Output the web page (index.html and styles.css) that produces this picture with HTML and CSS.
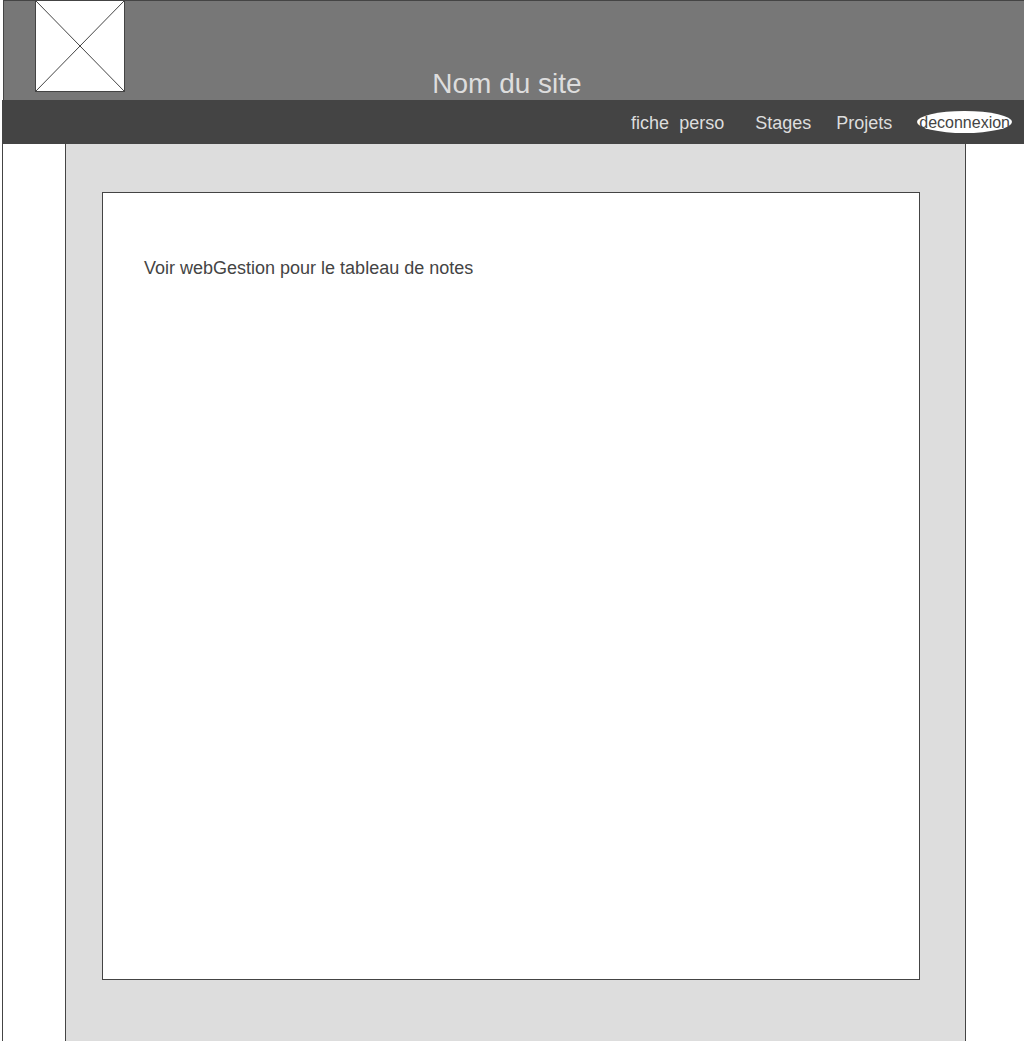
FILE: index.html
```html
<!DOCTYPE html>
<html lang="fr">
<head>
  <meta charset="utf-8">
  <meta name="viewport" content="width=device-width, initial-scale=1">
  <title>Nom du site</title>
  <link rel="stylesheet" href="styles.css">
</head>
<body>
  <div class="page">
    <header class="header">
      <svg class="logo" viewBox="0 0 90 92" role="img" aria-label="Logo">
        <rect x="0.5" y="0.5" width="89" height="91" fill="#fff" stroke="#444"/>
        <path d="M0.5 0.5L89.5 91.5M89.5 0.5L0.5 91.5" fill="none" stroke="#444"/>
      </svg>
      <h1 class="title">Nom du site</h1>
    </header>
    <nav class="nav">
      <a class="nav-link nav-link-wide" href="#fiche">fiche  perso</a>
      <a class="nav-link" href="#stages">Stages</a>
      <a class="nav-link" href="#projets">Projets</a>
      <button class="logout" type="button">deconnexion</button>
    </nav>
    <div class="content">
      <main class="main">
        <section class="panel">
          <p class="note">Voir webGestion pour le tableau de notes</p>
        </section>
      </main>
    </div>
  </div>
</body>
</html>
```

FILE: styles.css
```css
* {
  box-sizing: border-box;
}

body {
  margin: 0;
  background: #fff;
  color: #444;
  font-family: "Liberation Sans", Arial, sans-serif;
  font-size: 18px;
  line-height: 20px;
}

.page {
  display: flex;
  flex-direction: column;
  min-height: 100vh;
  padding-left: 2px;
}

.header {
  display: flex;
  align-items: flex-end;
  margin-left: 1px;
  padding-right: 135px;
  padding-left: 31px;
  border-top: 1px solid #444;
  border-left: 1px solid #444;
  background: #777;
}

.logo {
  flex: none;
  width: 90px;
  height: 92px;
  margin-top: -1px;
  margin-bottom: 8px;
}

.title {
  flex: 1;
  margin: 0;
  color: #ddd;
  font-size: 28px;
  font-weight: 400;
  line-height: 32px;
  text-align: center;
}

.nav {
  display: flex;
  align-items: center;
  justify-content: flex-end;
  height: 44px;
  padding-right: 12px;
  background: #444;
}

.nav-link {
  margin-right: 25px;
  padding-top: 2px;
  color: #ddd;
  text-decoration: none;
}

.nav-link-wide {
  margin-right: 31px;
  white-space: pre;
}

.logout {
  height: 22px;
  padding: 2px 2px 0;
  border: 0;
  border-radius: 50%;
  background: #fff;
  color: #444;
  font-family: inherit;
  font-size: 16px;
  line-height: 20px;
}

.content {
  display: flex;
  flex: 1;
  padding: 0 58px 0 62px;
  border-left: 1px solid #444;
}

.main {
  display: flex;
  flex: 1;
  flex-direction: column;
  padding: 48px 45px 61px 36px;
  border: solid #444;
  border-width: 0 1px;
  background: #ddd;
}

.panel {
  flex: 1;
  padding: 65px 41px;
  border: 1px solid #444;
  background: #fff;
}

.note {
  margin: 0;
}
```
